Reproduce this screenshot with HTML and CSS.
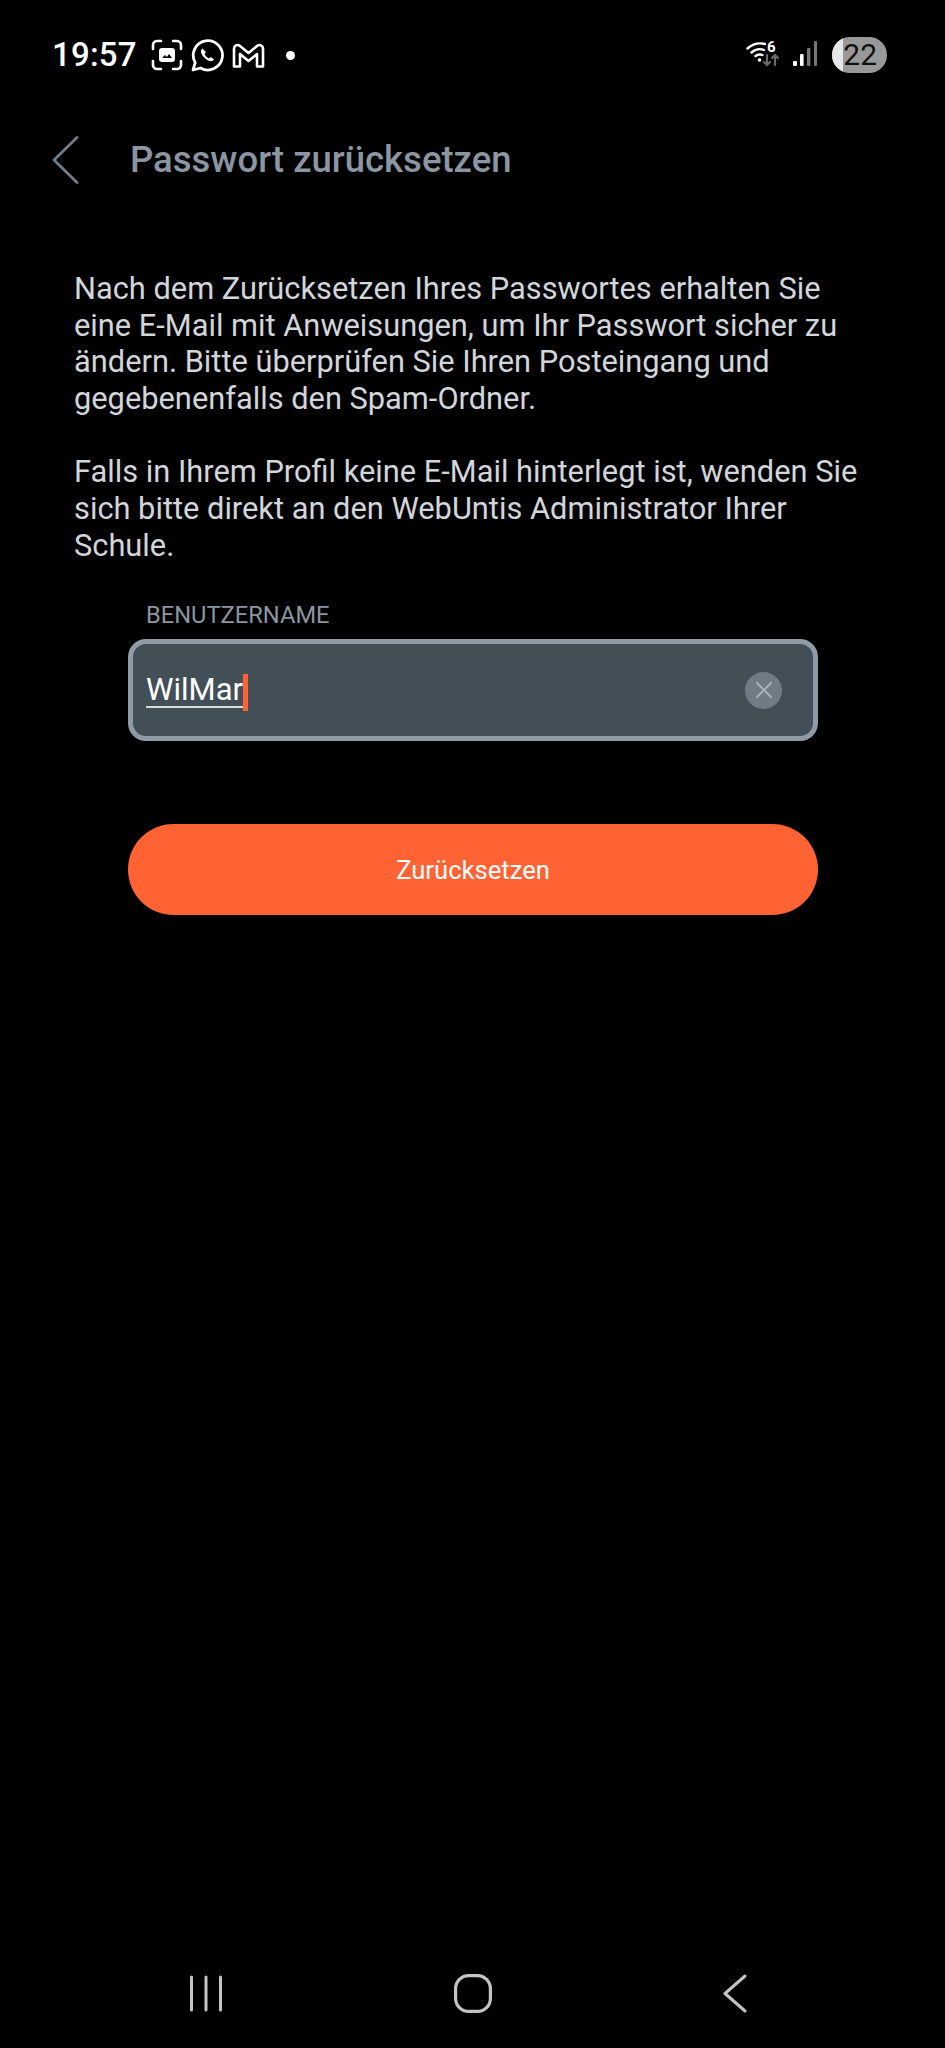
FILE: index.html
```html
<!DOCTYPE html>
<html lang="de">
<head>
<meta charset="utf-8">
<title>Passwort zurücksetzen</title>
<link rel="stylesheet" href="styles.css">
</head>
<body>
<div class="screen">
  <div class="status">
    <div class="status-left">
      <span class="time">19:57</span>
      <svg class="ic-frame" width="32" height="32" viewBox="0 0 32 32" fill="none" stroke="#fff" stroke-width="2.6" stroke-linecap="round">
        <path d="M2 10V6a4 4 0 0 1 4-4h4M22 2h4a4 4 0 0 1 4 4v4M30 22v4a4 4 0 0 1-4 4h-4M10 30H6a4 4 0 0 1-4-4v-4"/>
        <rect x="8" y="9" width="16" height="14" rx="3" fill="#fff" stroke="none"/>
        <path d="M11 19l3-3 2 2 2-3 3 4z" fill="#000" stroke="none"/>
      </svg>
      <svg class="ic-wa" width="33" height="33" viewBox="0 0 33 33" fill="none" stroke="#fff" stroke-width="2.8" stroke-linejoin="round">
        <path d="M2 31l2.2-7.4A14.6 14.6 0 1 1 9.6 29z"/>
        <path d="M11.5 9.5c-1.6 1.2-2 3-1 5.2 1.4 3 4 5.5 7.3 7 2.2.9 4 .5 5.2-1.2l-3.2-2.4-1.7 1.5c-2-.9-3.7-2.6-4.600-4.600l1.500-1.700z" fill="#fff" stroke="none"/>
      </svg>
      <svg class="ic-m" width="33" height="26" viewBox="0 0 33 26" fill="none" stroke="#fff" stroke-width="2.6" stroke-linejoin="round">
        <path d="M2 6.5a3.5 3.5 0 0 1 5.7-2.7L16.5 11l8.8-7.2A3.5 3.5 0 0 1 31 6.5V24.500h-6V12l-8.500 7L8 12v12.500H2z"/>
      </svg>
      <span class="dot"></span>
    </div>
    <div class="status-right">
      <svg class="ic-wifi" width="32" height="28" viewBox="0 0 32 28" fill="none" stroke-linecap="round">
        <path d="M1.5 8.500C7 3.500 13 2.500 19 4M5.500 12.500c4-3.500 8.500-4 12.500-2.500M9.500 16c2-1.500 4.500-2 7-1" stroke="#fff" stroke-width="2.400"/>
        <circle cx="13.500" cy="20" r="1.800" fill="#fff"/>
        <text x="21" y="12" class="wifi-six">6</text>
        <path d="M21 15v10M18 22l3 3 3-3M29 25V15M26 18l3-3 3 3" stroke="#6b6b6b" stroke-width="2.200"/>
      </svg>
      <svg class="ic-signal" width="26" height="26" viewBox="0 0 26 26" stroke-linecap="round">
        <rect x="0" y="20" width="4" height="5" rx="1" fill="#fff"/>
        <rect x="7" y="13" width="3.600" height="12" rx="1" fill="#fff"/>
        <rect x="14" y="7" width="3.400" height="18" rx="1" fill="#777"/>
        <rect x="21" y="0" width="3" height="25" rx="1" fill="#777"/>
      </svg>
      <div class="battery"><span class="battery-fill"></span><span class="battery-text">22</span></div>
    </div>
  </div>

  <header class="titlebar">
    <svg class="ic-back" width="28" height="50" viewBox="0 0 28 50" fill="none" stroke="#6f7d88" stroke-width="2.800" stroke-linecap="round" stroke-linejoin="round">
      <path d="M25 2.500L2 25l23 22.500"/>
    </svg>
    <h1 class="title">Passwort zurücksetzen</h1>
  </header>

  <main class="content">
    <p class="copy">Nach dem Zurücksetzen Ihres Passwortes erhalten Sie<br>eine E-Mail mit Anweisungen, um Ihr Passwort sicher zu<br>ändern. Bitte überprüfen Sie Ihren Posteingang und<br>gegebenenfalls den Spam-Ordner.</p>
    <p class="copy copy-second">Falls in Ihrem Profil keine E-Mail hinterlegt ist, wenden Sie<br>sich bitte direkt an den WebUntis Administrator Ihrer<br>Schule.</p>
    <form class="form">
      <label class="label">BENUTZERNAME</label>
      <div class="field">
        <span class="value">WilMar</span><span class="caret"></span>
        <span class="clear">
          <svg width="18" height="18" viewBox="0 0 18 18" fill="none" stroke="#aab4bc" stroke-width="1.800" stroke-linecap="round"><path d="M2 2l14 14M16 2L2 16"/></svg>
        </span>
      </div>
      <div class="button">Zurücksetzen</div>
    </form>
  </main>

  <nav class="navbar">
    <svg width="32" height="37" viewBox="0 0 32 37" fill="none" stroke="#c4c4c4" stroke-width="3" stroke-linecap="round"><path d="M1.500 2v33M16 2v33M30.500 2v33"/></svg>
    <svg width="38" height="39" viewBox="0 0 38 39" fill="none" stroke="#c4c4c4" stroke-width="3.200"><rect x="1.600" y="1.600" width="34.800" height="35.800" rx="13"/></svg>
    <svg width="24" height="39" viewBox="0 0 24 39" fill="none" stroke="#c4c4c4" stroke-width="3" stroke-linecap="round" stroke-linejoin="round"><path d="M22 2L2 19.500 22 37"/></svg>
  </nav>
</div>
</body>
</html>
```

FILE: styles.css
```css
* { box-sizing: border-box; }
html, body { margin: 0; padding: 0; background: #000; }
.screen {
  width: 945px;
  height: 2048px;
  background: #000;
  display: flex;
  flex-direction: column;
  font-family: Roboto, "Liberation Sans", sans-serif;
  color: #fff;
  overflow: hidden;
}
.status {
  height: 110px;
  flex: none;
  padding: 0 58px 0 52px;
  display: flex;
  justify-content: space-between;
  align-items: center;
}
.status-left, .status-right { display: flex; align-items: center; }
.time { font-size: 33px; font-weight: 500; line-height: 38px; width: 99px; letter-spacing: 0.2px; }
.ic-frame { margin-left: 0; }
.ic-wa { margin-left: 8px; }
.ic-m { margin-left: 8px; }
.dot { width: 9px; height: 9px; border-radius: 50%; background: #fff; margin-left: 21px; }
.ic-wifi { margin-top: -3px; overflow: visible; }
.wifi-six { font-family: Roboto, sans-serif; font-size: 15px; font-weight: 700; fill: #fff; }
.ic-signal { margin-left: 15px; margin-top: -3px; }
.battery {
  margin-left: 13px;
  width: 55px;
  height: 36px;
  border-radius: 18px;
  background: #999;
  position: relative;
  overflow: hidden;
  display: flex;
  align-items: center;
  justify-content: flex-end;
  padding-right: 10px;
}
.battery-fill { position: absolute; left: 0; top: 0; bottom: 0; width: 11px; background: #e6e6e6; }
.battery-text { position: relative; color: #111; font-size: 30px; font-weight: 400; line-height: 36px; }
.titlebar {
  height: 100px;
  flex: none;
  padding: 0 0 0 52px;
  display: flex;
  align-items: center;
}
.title {
  margin: 0 0 0 50px;
  font-size: 36.5px;
  font-weight: 500;
  color: #8a96a1;
  line-height: 40px;
}
.content { padding: 61px 74px 0; flex: 1; }
.copy {
  margin: 0;
  font-size: 30.8px;
  line-height: 36.6px;
  color: #d2d6da;
}
.copy-second { margin-top: 37px; }
.form { margin: 37px 0 0 54px; width: 690px; }
.label {
  display: block;
  padding-left: 18px;
  font-size: 23.7px;
  line-height: 28px;
  color: #8a96a1;
}
.field {
  margin-top: 10px;
  height: 102px;
  border: 5px solid #8f9ca7;
  border-radius: 18px;
  background: #434f57;
  padding: 0 31px 0 13px;
  display: flex;
  align-items: center;
}
.value {
  font-size: 31px;
  line-height: 32px;
  color: #fff;
  border-bottom: 2px solid #d7dbde;
  margin-top: 2px;
}
.caret { width: 5px; height: 37px; background: #ff6333; margin-top: 4px; }
.clear {
  margin-left: auto;
  width: 37px;
  height: 37px;
  border-radius: 50%;
  background: #6f7c86;
  display: flex;
  align-items: center;
  justify-content: center;
}
.button {
  margin-top: 83px;
  height: 91px;
  border-radius: 46px;
  background: #ff6333;
  color: #fff;
  font-size: 25.6px;
  display: flex;
  align-items: center;
  justify-content: center;
}
.navbar {
  height: 110px;
  flex: none;
  padding: 0 198px 0 190px;
  display: flex;
  justify-content: space-between;
  align-items: center;
}
```
